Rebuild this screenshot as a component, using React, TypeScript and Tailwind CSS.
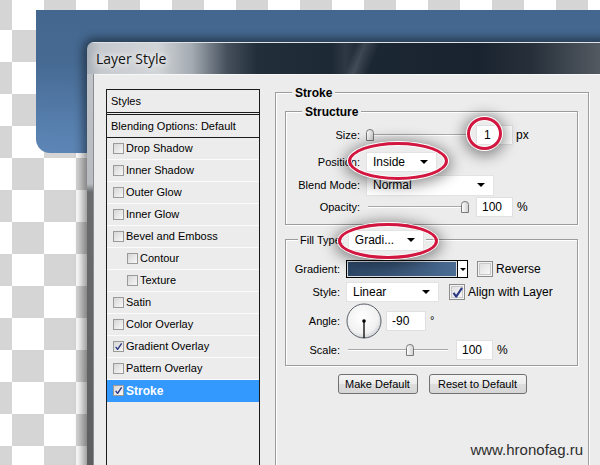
import React from 'react';

type Item = { label: string; sub?: boolean; checked?: boolean; active?: boolean };

const items: Item[] = [
  { label: 'Drop Shadow' },
  { label: 'Inner Shadow' },
  { label: 'Outer Glow' },
  { label: 'Inner Glow' },
  { label: 'Bevel and Emboss' },
  { label: 'Contour', sub: true },
  { label: 'Texture', sub: true },
  { label: 'Satin' },
  { label: 'Color Overlay' },
  { label: 'Gradient Overlay', checked: true },
  { label: 'Pattern Overlay' },
  { label: 'Stroke', checked: true, active: true },
];

const Tick = ({ className }: { className: string }) => (
  <svg viewBox="0 0 12 12" className={className}>
    <path d="M2.3 6.4 L4.8 9.8 L10.2 1.8" fill="none" stroke="#2a3783" strokeWidth="1.9" strokeLinejoin="round" />
  </svg>
);

const SmallBox = ({ checked }: { checked?: boolean }) => (
  <span className="w-[11px] h-[11px] shrink-0 border border-[#9a9a9a] bg-[linear-gradient(135deg,#d6d6d6,#f8f8f8)] flex items-center justify-center">
    {checked && <Tick className="w-[9px] h-[9px]" />}
  </span>
);

const BigBox = ({ checked }: { checked?: boolean }) => (
  <span className="w-[16px] h-[16px] shrink-0 border border-[#8c8c8c] bg-[linear-gradient(135deg,#dcdcdc,#fbfbfb)] shadow-[inset_0_0_0_1px_#f4f4f4,inset_0_0_0_2px_#c8c8c8] flex items-center justify-center">
    {checked && <Tick className="w-[13px] h-[13px]" />}
  </span>
);

const Arrow = () => (
  <span className="w-0 h-0 border-l-[4px] border-r-[4px] border-t-[4px] border-l-transparent border-r-transparent border-t-black" />
);

const Dropdown = ({ text, className }: { text: string; className: string }) => (
  <div className={`flex items-center justify-between bg-white border border-[#e3e3e3] pl-[6px] pr-[8px] text-[12px] ${className}`}>
    <span>{text}</span>
    <Arrow />
  </div>
);

const Field = ({ text, className }: { text: string; className: string }) => (
  <div className={`flex items-center h-[20px] bg-white border border-[#e0e0e0] text-[12px] ${className}`}>{text}</div>
);

const Slider = ({ pos, className }: { pos: number; className: string }) => (
  <div className={`relative h-[14px] ${className}`}>
    <div className="absolute left-[2px] right-[2px] top-[6px] h-[2px] border-t border-b border-t-[#a8a8a8] border-b-white" />
    <svg className="absolute top-[1px]" style={{ left: pos }} width="8" height="12" viewBox="0 0 8 12">
      <defs>
        <linearGradient id="th" x1="0" y1="0" x2="1" y2="0">
          <stop offset="0" stopColor="#ffffff" />
          <stop offset="1" stopColor="#cfcfcf" />
        </linearGradient>
      </defs>
      <path d="M0.5 3.5 Q0.5 0.5 4 0.5 Q7.5 0.5 7.5 3.5 L7.5 11.5 L0.5 11.5 Z" fill="url(#th)" stroke="#7a7a7a" />
    </svg>
  </div>
);

const Legend = ({ children, className }: { children: React.ReactNode; className: string }) => (
  <div className={`flex items-center w-fit bg-[#ececec] px-[3px] font-bold text-[12px] ${className}`}>{children}</div>
);

const Ring = ({ className }: { className: string }) => (
  <div
    className={`absolute rounded-[50%] border-[3px] border-[#d3163f] shadow-[0_0_0_1px_#ffffff,0_2px_14px_4px_rgba(0,0,0,0.42),inset_0_0_0_1px_#ffffff] ${className}`}
  />
);

const groupBox = 'border border-[#9c9c9c] shadow-[inset_1px_1px_0_#ffffff,1px_1px_0_#ffffff]';

export default function App() {
  return (
    <div className="relative w-[600px] h-[465px] overflow-hidden font-['Liberation_Sans',Arial,sans-serif] text-[11px] text-black bg-[repeating-conic-gradient(#d5d5d5_0%_25%,#ffffff_0%_50%)] bg-[length:64px_64px] bg-[position:12px_-2px]">
      {/* blue layer shape on the canvas */}
      <div className="absolute left-[36px] top-[10px] w-[600px] h-[143px] rounded-bl-[14px] bg-[radial-gradient(ellipse_at_0%_100%,#5d86b6_0%,rgba(93,134,182,0)_45%),linear-gradient(180deg,#44678f_0%,#476c95_65%,#4d74a2_100%)]" />

      {/* dialog window */}
      <div className="relative ml-[87px] mt-[42px] w-[540px] h-[440px] rounded-tl-[7px] overflow-hidden shadow-[0_0_10px_4px_rgba(0,0,0,0.45)] flex flex-col">
        <div className="h-[32px] shrink-0 flex items-center pl-[9px] border-t border-[#dfe3e6] bg-[linear-gradient(112deg,transparent_0px,transparent_250px,rgba(255,255,255,0.14)_258px,transparent_272px),linear-gradient(90deg,#a9b0b7_0px,#c6cacf_14px,#d2d5d8_70px,#a3aab1_105px,#45505c_140px,#232e3b_170px,#1e2936_245px,#2d3844_258px,#1c2734_276px,#19232f_390px,#27303a_445px,#575e66_520px)]">
          <span className="font-['Open_Sans',sans-serif] text-[14px] text-[#121212] [text-shadow:0_0_6px_#ffffff,0_0_10px_#ffffff]">Layer Style</span>
        </div>

        <div className="flex flex-1">
          <div className="w-[7px] shrink-0 border-r border-[#8a8d90] bg-[linear-gradient(180deg,#c0c4c8_0px,#b8bcc0_110px,#6a6c6e_118px,#5c5d5e_100%)]" />
          <div className="flex-1 flex items-start bg-[#ececec] border-t border-[#f8f8f8] pt-[14px] pl-[12px]">
            {/* styles list */}
            <div className="w-[154px] h-[400px] shrink-0 border border-[#1b1b1b] flex flex-col">
              <div className="h-[23px] flex items-center pl-[4px] border-b border-[#1b1b1b]">Styles</div>
              <div className="h-[1px]" />
              <div className="h-[24px] flex items-center pl-[4px] border-t border-b border-[#1b1b1b]">Blending Options: Default</div>
              {items.map((it) => (
                <div
                  key={it.label}
                  className={`h-[22px] flex items-center gap-[2px] border-b ${it.sub ? 'pl-[20px]' : 'pl-[6px]'} ${
                    it.active ? 'bg-[#3399ff] border-[#3399ff] text-white font-bold text-[12px]' : 'border-[#fbfbfb]'
                  }`}
                >
                  <SmallBox checked={it.checked} />
                  <span>{it.label}</span>
                </div>
              ))}
            </div>

            {/* Stroke group */}
            <div className={`ml-[15px] w-[314px] h-[390px] mt-[3px] flex flex-col ${groupBox}`}>
              <Legend className="-mt-[8px] h-[16px] ml-[16px]">Stroke</Legend>

              <div className={`mt-[10px] ml-[9px] mr-[10px] flex flex-col pb-[7px] ${groupBox}`}>
                <Legend className="-mt-[8px] h-[16px] ml-[16px]">Structure</Legend>
                <div className="flex items-center h-[22px] mt-[4px]">
                  <span className="w-[74px] text-right">Size:</span>
                  <Slider pos={0} className="ml-[6px] w-[104px]" />
                  <Field text="1" className="ml-[6px] w-[37px] pl-[7px]" />
                  <span className="ml-[3px] text-[12px]">px</span>
                </div>
                <div className="flex items-center h-[22px] mt-[5px]">
                  <span className="w-[74px] text-right">Position:</span>
                  <Dropdown text="Inside" className="ml-[6px] w-[71px] h-[20px]" />
                </div>
                <div className="flex items-center h-[22px] mt-[1px]">
                  <span className="w-[74px] text-right">Blend Mode:</span>
                  <Dropdown text="Normal" className="ml-[6px] w-[128px] h-[21px]" />
                </div>
                <div className="flex items-center h-[20px] mt-[1px]">
                  <span className="w-[74px] text-right">Opacity:</span>
                  <Slider pos={95} className="ml-[6px] w-[104px]" />
                  <Field text="100" className="ml-[6px] w-[37px] pl-[5px]" />
                  <span className="ml-[4px] text-[12px]">%</span>
                </div>
              </div>

              <div className={`mt-[14px] ml-[9px] mr-[10px] flex flex-col pb-[5px] ${groupBox}`}>
                <div className="flex items-center w-fit bg-[#ececec] px-[2px] -mt-[11px] h-[22px] ml-[12px]">
                  <span>Fill Type:</span>
                  <Dropdown text="Gradi..." className="ml-[4px] w-[76px] h-[21px]" />
                </div>
                <div className="flex items-center h-[18px] mt-[9px]">
                  <span className="w-[54px] text-right">Gradient:</span>
                  <div className="ml-[6px] w-[122px] h-[18px] border border-black flex">
                    <div className="flex-1 border border-[#d9dde2] bg-[linear-gradient(90deg,#2b4565,#4a6b92)]" />
                    <div className="w-[10px] border-l border-black bg-white flex items-center justify-center">
                      <span className="w-0 h-0 border-l-[3px] border-r-[3px] border-t-[3px] border-l-transparent border-r-transparent border-t-black" />
                    </div>
                  </div>
                  <span className="ml-[9px]"><BigBox /></span>
                  <span className="ml-[3px] text-[12px]">Reverse</span>
                </div>
                <div className="flex items-center h-[20px] mt-[4px]">
                  <span className="w-[54px] text-right">Style:</span>
                  <Dropdown text="Linear" className="ml-[6px] w-[93px] h-[20px]" />
                  <span className="ml-[10px]"><BigBox checked /></span>
                  <span className="ml-[3px] text-[12px]">Align with Layer</span>
                </div>
                <div className="flex items-center h-[36px] mt-[1px]">
                  <span className="w-[54px] text-right">Angle:</span>
                  <svg className="ml-[6px]" width="36" height="36" viewBox="0 0 36 36">
                    <defs>
                      <radialGradient id="dial" cx="0.45" cy="0.4" r="0.6">
                        <stop offset="0" stopColor="#ffffff" />
                        <stop offset="0.75" stopColor="#f2f2f2" />
                        <stop offset="1" stopColor="#d2d4d8" />
                      </radialGradient>
                    </defs>
                    <circle cx="18" cy="18" r="17" fill="url(#dial)" stroke="#5a5f68" strokeWidth="1" />
                    <line x1="18" y1="18" x2="18" y2="35" stroke="#000" strokeWidth="1.3" />
                    <circle cx="18" cy="18" r="1.8" fill="#000" />
                  </svg>
                  <Field text="-90" className="ml-[4px] w-[40px] h-[19px] pl-[5px]" />
                  <span className="ml-[4px] self-start mt-[9px] text-[11px]">°</span>
                </div>
                <div className="flex items-center h-[20px] mt-[1px]">
                  <span className="w-[54px] text-right">Scale:</span>
                  <Slider pos={60} className="ml-[6px] w-[104px]" />
                  <Field text="100" className="ml-[6px] w-[37px] pl-[5px]" />
                  <span className="ml-[4px] text-[12px]">%</span>
                </div>
              </div>

              <div className="flex justify-center gap-[11px] mt-[8px]">
                <button className="w-[80px] h-[20px] border border-[#707070] rounded-[3px] bg-[linear-gradient(180deg,#f4f4f4_0%,#ebebeb_50%,#dddddd_51%,#d6d6d6_100%)] text-[11px]">
                  Make Default
                </button>
                <button className="w-[98px] h-[20px] border border-[#707070] rounded-[3px] bg-[linear-gradient(180deg,#f4f4f4_0%,#ebebeb_50%,#dddddd_51%,#d6d6d6_100%)] text-[11px]">
                  Reset to Default
                </button>
              </div>
            </div>
          </div>
        </div>
      </div>

      {/* annotation rings */}
      <Ring className="left-[467px] top-[117px] w-[35px] h-[33px]" />
      <Ring className="left-[348px] top-[142px] w-[100px] h-[38px]" />
      <Ring className="left-[338px] top-[223px] w-[100px] h-[36px]" />

      <div className="absolute right-[17px] top-[442px] leading-[15px] font-['Liberation_Sans',Arial,sans-serif] text-[15px] text-[#2e2e2e]">
        www.hronofag.ru
      </div>
    </div>
  );
}
